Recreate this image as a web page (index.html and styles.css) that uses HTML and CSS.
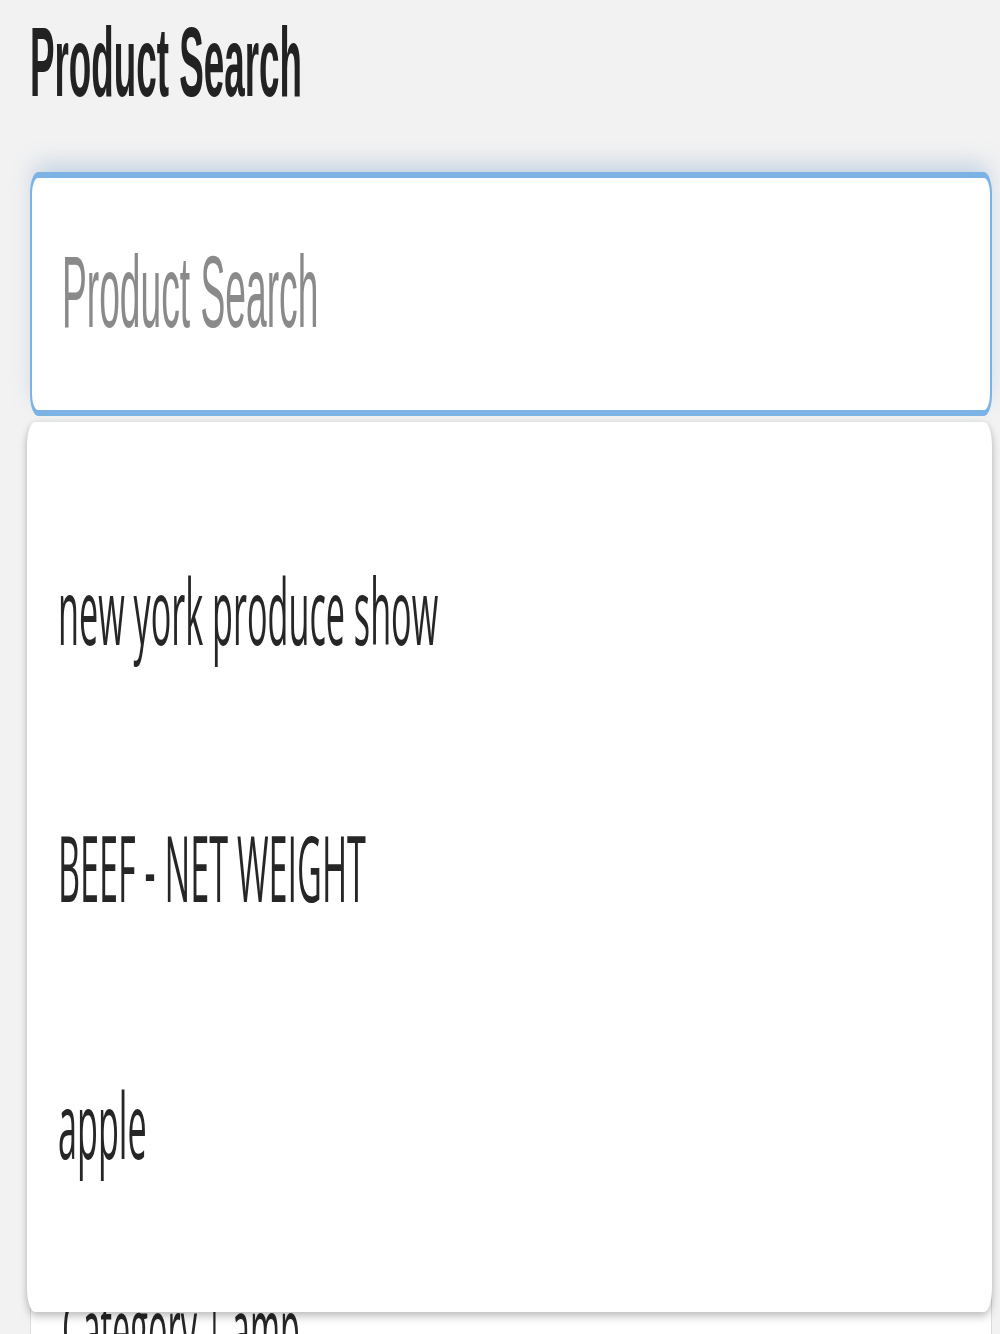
FILE: index.html
```html
<!DOCTYPE html>
<html lang="en">
<head>
    <meta charset="UTF-8">
    <meta name="viewport" content="width=device-width, initial-scale=1.0">
    <title>Product Search</title>
    <link rel="stylesheet" href="styles.css">
</head>
<body>
    <div class="page">
        <h1 class="title"><span>Product Search</span></h1>

        <div class="search">
            <div class="search-input">
                <span class="placeholder">Product Search</span>
            </div>
            <ul class="suggestions">
                <li><span>new york produce show</span></li>
                <li><span>BEEF - NET WEIGHT</span></li>
                <li><span>apple</span></li>
            </ul>
        </div>

        <div class="results">
            <div class="result-meta"><span>Category | amp</span></div>
        </div>
    </div>
</body>
</html>
```
FILE: styles.css
```css
html, body {
    margin: 0;
    padding: 0;
    background-color: #f2f2f2;
}

.page {
    height: 100vh;
    overflow: hidden;
    padding: 0 8px 0 30px;
    font-family: 'Liberation Sans', Arial, sans-serif;
}

/* the screenshot is stretched tall, so each text run is scaled on its own */
.title span,
.placeholder,
.suggestions span,
.result-meta span {
    display: inline-block;
    line-height: 1;
    transform-origin: center;
}

.title {
    margin: 0;
    height: 130px;
    display: flex;
    align-items: center;
    font-size: 36.8px;
    font-weight: bold;
    color: #222;
}

.title span {
    transform: scaleY(2.66);
}

.search {
    position: relative;
    margin-top: 42px;
}

.search-input {
    box-sizing: border-box;
    height: 244px;
    display: flex;
    align-items: center;
    padding-left: 30px;
    background-color: #fff;
    border: solid #7db2e5;
    border-width: 6px 2px;
    border-radius: 8px / 22px;
    box-shadow: 0 -12px 22px -4px rgba(110, 150, 200, 0.35);
}

.placeholder {
    font-size: 37.2px;
    color: #8a8a8a;
    transform: scaleY(2.72);
}

.suggestions {
    position: absolute;
    top: calc(100% + 6px);
    left: -3px;
    right: 0;
    z-index: 2;
    box-sizing: border-box;
    height: 890px;
    margin: 0;
    padding: 60px 0 0 31px;
    list-style: none;
    background-color: #fff;
    border-radius: 8px / 24px;
    box-shadow: 0 5px 8px rgba(0, 0, 0, 0.22), 0 0 6px rgba(0, 0, 0, 0.08);
    font-family: 'Open Sans', 'Noto Sans', sans-serif;
    font-size: 34.2px;
    color: #262626;
}

.suggestions li {
    height: 257px;
    display: flex;
    align-items: center;
}

.suggestions span {
    transform: scaleY(2.68);
}

.results {
    margin-top: 834px;
    background-color: #fff;
    border: 1px solid #dcdcdc;
    padding: 28px 0 0 31px;
}

.result-meta {
    height: 100px;
    display: flex;
    align-items: center;
    font-family: 'Open Sans', 'Noto Sans', sans-serif;
    font-size: 32.5px;
    color: #262626;
}

.result-meta span {
    transform: scaleY(2.72);
}
```
